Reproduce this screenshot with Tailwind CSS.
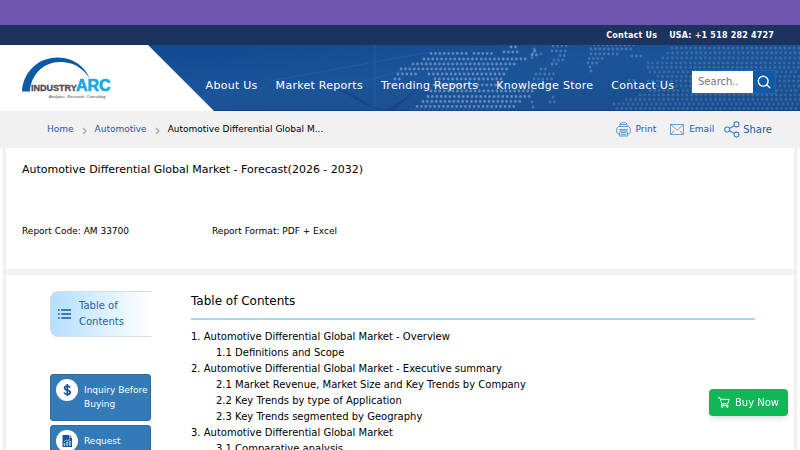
<!DOCTYPE html>
<html lang="en">
<head>
  <meta charset="UTF-8">
  <meta name="viewport" content="width=device-width, initial-scale=1">
  <title>Automotive Differential Global Market - Forecast(2026 - 2032)</title>
  <script src="https://cdn.jsdelivr.net/npm/@tailwindcss/browser@4"></script>
</head>
<body class="bg-white text-black font-['DejaVu_Sans',sans-serif]">
  <div class="h-[25px] bg-[#6f55ae]"></div>

  <!-- Top bar -->
  <div class="h-5 bg-[#1b335e] text-white text-[8px] font-bold tracking-wide flex items-center justify-end gap-3 pt-px pr-[26px]">
    <a href="#">Contact Us</a>
    <a href="tel:+15182824727">USA: +1 518 282 4727</a>
  </div>

  <!-- Header -->
  <header class="relative h-[66px] bg-[#19509a] overflow-hidden flex items-center">
    <svg class="absolute inset-0 w-full h-full" viewBox="0 0 800 66" preserveAspectRatio="xMaxYMid slice" aria-hidden="true">
      <defs>
        <linearGradient id="sky" x1="0" y1="0" x2="1" y2="1">
          <stop offset="0" stop-color="#0e4791"/>
          <stop offset=".5" stop-color="#1c5499"/>
          <stop offset="1" stop-color="#184d8b"/>
        </linearGradient>
      </defs>
      <rect width="800" height="66" fill="url(#sky)"/>
      <path d="M270 36L430 7M375 0v66M330 46l70-20" stroke="#3b74b3" stroke-width="1" opacity=".3"/>
      <path d="M312 36q24 6 43 18l20 10h8l-10-2q-20-14-35-18zM382 65q18-4 40-28q-18 22-28 28z" fill="#123f7c" opacity=".6"/>
      <!-- Dotted world map, one dashed line per row of dots -->
      <g fill="none" stroke="#a9c6e6" stroke-width="2.800" stroke-linecap="round" stroke-dasharray="0 4.400">
        <path opacity=".5" d="M431 8.500h36M474 8.500h20M424 14h104M413 19h104M401 24h106M398 29h20M429 29h76M395 34h8M435 34h68M434 40h68M431 46h105M428 51.500h104M423 56.500h99M417 61.500h99M411 66h90M511 2h6M504 7h14M535 6h1M532 10h5"/>
        <path opacity=".3" d="M553 1h15M552 6h15M560 10.500h5M554 15h10M552 19h6M534 4h1M533 8h1M532 13h1M541 9h1M594 0h40M591 4h40M591 9h28M589 13.500h16M588 18h12M590 22h1M591 26h1M632 11h12M541 24h6M536 29h18M534 34h18M539 39h10M553 52h4M550 57h6M532 57h4M533 62h1"/>
      </g>
      <g fill="none" stroke="#8db4da" stroke-width="2.800" stroke-linecap="round" stroke-dasharray="0 4.700">
        <path opacity=".26" d="M672 3h128M668 8h132M663 13h137M648 18h152M648 22.500h152M650 27h150M658 31.500h142M629 35.500h5M648 36h152M653 41h147M650 45.500h150M640 50h160M626 54.500h174M614 59h186M617 63.500h183"/>
      </g>
      <path d="M0 65.500h800" stroke="#0d4288"/>
    </svg>

    <!-- Logo on its slanted white panel -->
    <a href="#" class="relative z-10 shrink-0 w-[214px] h-full bg-white [clip-path:polygon(0_0,148px_0,100%_100%,0_100%)]" aria-label="IndustryARC">
      <svg class="block w-[114px] h-[66px]" viewBox="0 0 114 66">
        <path d="M22 46.500C23 29 36 12.500 58 12.500C74 12.500 85 22 90 34C82 21.500 72 17 60 17C44 17 31 29 30 46.500z" fill="#0c5aa6"/>
        <text x="31" y="46" font-family="Liberation Sans, sans-serif" font-weight="700" font-size="9" fill="#4a4a4c" stroke="#4a4a4c" stroke-width=".3">INDUSTRY</text>
        <text x="76" y="46" font-family="Liberation Sans, sans-serif" font-weight="700" font-size="16" fill="#1ba7e0" stroke="#1ba7e0" stroke-width=".6">ARC</text>
        <text x="49" y="53" font-family="Liberation Sans, sans-serif" font-style="italic" font-size="4" fill="#444">Analytics. Research. Consulting</text>
      </svg>
    </a>

    <nav class="relative -ml-[60px] mt-4 flex gap-[18px] text-[11px] leading-4 tracking-wide text-white whitespace-nowrap">
      <a href="#">Home</a>
      <a href="#">About Us</a>
      <a href="#">Market Reports</a>
      <a href="#">Trending Reports</a>
      <a href="#">Knowledge Store</a>
      <a href="#">Contact Us</a>
    </nav>

    <form class="relative ml-auto mr-6 mt-[7px] flex h-6 border border-[#1f66b0]">
      <input type="text" aria-label="Search" placeholder="Search.." class="w-[61px] bg-white px-[6px] text-[10px] text-black placeholder:text-[#757575] outline-none">
      <button type="submit" aria-label="Search" class="w-[22px] bg-[#0f5aa5] flex items-center justify-center">
        <svg class="size-[14px]" viewBox="0 0 14 14" fill="none" stroke="#fff" stroke-width="1.400" stroke-linecap="round"><circle cx="6.200" cy="6.200" r="4.900"/><path d="M9.800 9.800l3 3"/></svg>
      </button>
    </form>
  </header>

  <!-- Breadcrumb and page actions -->
  <div class="h-[37px] bg-[#f1f1f1] pl-[47px] pr-7 flex items-center justify-between text-[9px] text-[#2459a3]">
    <ol class="flex items-center gap-2">
      <li><a href="#">Home</a></li>
      <li><svg class="w-[5px] h-2 mt-[2px]" viewBox="0 0 5 8" fill="none" stroke="#aaa" stroke-width="1.400"><path d="M1 1l3 3-3 3"/></svg></li>
      <li><a href="#">Automotive</a></li>
      <li><svg class="w-[5px] h-2 mt-[2px]" viewBox="0 0 5 8" fill="none" stroke="#aaa" stroke-width="1.400"><path d="M1 1l3 3-3 3"/></svg></li>
      <li class="text-black">Automotive Differential Global M...</li>
    </ol>
    <div class="flex items-center">
      <button type="button" class="flex items-center gap-1 mr-[14px]">
        <svg class="size-[15px]" viewBox="0 0 15 15" fill="none" stroke="#4f8fc9" stroke-width=".9">
          <path d="M4 4.500V2l1.500-1.300h4L11 2v2.500M4.500 2.500h6M2.500 4.500h10l1.800 2v4l-1.500 1.300h-1.500M3.700 11.800H2.200L.7 10.500v-4l1.800-2M3 7.500h9M4 9l-.8 5h8.600L11 9zM5 10.500h5M4.700 12.300h5.600"/>
        </svg>
        Print
      </button>
      <button type="button" class="flex items-center gap-[5px] mr-[10px]">
        <svg class="w-[14px] h-[11px]" viewBox="0 0 14 11" fill="none" stroke="#4f8fc9" stroke-width=".8"><rect x=".5" y=".5" width="13" height="10"/><path d="M1 .8l6 5.400L13 .8M1 10.200l3-3.400M13 10.200l-3-3.400"/></svg>
        Email
      </button>
      <button type="button" class="flex items-center gap-[3px] text-[10px]">
        <svg class="w-4 h-[17px]" viewBox="0 0 16 17" fill="none" stroke="#3f84c4" stroke-width="1.100"><circle cx="3.200" cy="8.500" r="2.500"/><circle cx="12.500" cy="3.400" r="2.500"/><circle cx="12.500" cy="13.600" r="2.500"/><path d="M5.500 7.300l4.700-2.600M5.500 9.700l4.700 2.600"/></svg>
        Share
      </button>
    </div>
  </div>

  <main class="mx-[3px] px-[3px] bg-[#f1f1f1] flex flex-col gap-[6px]">
    <section class="bg-white h-[121px] px-4 pt-3">
      <h1 class="text-[11px] leading-5">Automotive Differential Global Market - Forecast(2026 - 2032)</h1>
      <div class="mt-[43px] flex text-[9px] leading-4">
        <p class="w-[190px]">Report Code: AM 33700</p>
        <p>Report Format: PDF + Excel</p>
      </div>
    </section>

    <section class="bg-white flex gap-10 pl-11 pr-[39px] py-4">
      <aside class="w-[101px] shrink-0">
        <a href="#toc" class="h-[46px] flex items-center gap-2 pl-[7px] border border-r-0 border-[#d5dde4] rounded-l-lg bg-linear-to-r from-[#b3dfff] to-white text-[10px] leading-4 text-[#2360a5]">
          <svg class="w-[13px] h-[10px] shrink-0" viewBox="0 0 13 10" fill="none" stroke="#14559f" stroke-width="1.300"><path d="M0 1h1.600M0 5h1.600M0 9h1.600M3.300 1H13M3.300 5H13M3.300 9H13"/></svg>
          <span>Table of<br>Contents</span>
        </a>
        <div class="mt-[37px] flex flex-col gap-1 text-[9px] leading-[14px] text-white">
          <a href="#" class="h-[47px] rounded-[3px] bg-[#337ab7] border border-[#2e6da4] flex items-start gap-[6px] pl-[5px] pt-1">
            <svg class="size-[22px] shrink-0" viewBox="0 0 22 22"><circle cx="11" cy="11" r="11" fill="#fff"/><path d="M14.200 8.400Q13.300 7.100 11.400 7.100Q8.600 7.100 8.600 9Q8.600 10.500 11.200 11.100Q14.200 11.700 14.200 13.400Q14.200 15.200 11.400 15.200Q9 15.200 8 13.600M11.300 5v12" fill="none" stroke="#14559f" stroke-width="1.700"/></svg>
            <span class="pt-1">Inquiry Before Buying</span>
          </a>
          <a href="#" class="h-[47px] rounded-[3px] bg-[#337ab7] border border-[#2e6da4] flex items-start gap-[6px] pl-[5px] pt-1">
            <svg class="size-[22px] shrink-0" viewBox="0 0 22 22"><circle cx="11" cy="11" r="11" fill="#fff"/><path d="M6.500 5h7L16 7.500V17H6.500z" fill="#14559f"/><path d="M13.500 5v2.500H16M8 15.500v-2h1v2zM10.700 15.500V12h1v3.500zM13.400 15.500V11h1v4.500zM8 11.500l2.700-1.500 1 .8 2.300-2" fill="none" stroke="#cfe2f3" stroke-width=".7"/></svg>
            <span class="pt-1">Request</span>
          </a>
        </div>
      </aside>

      <article id="toc" class="flex-1">
        <h2 class="h-[29px] border-b-2 border-[#a5d9f0] text-[12px] leading-5">Table of Contents</h2>
        <ol class="mt-[9px] text-[10px] leading-4">
          <li>1. Automotive Differential Global Market - Overview</li>
          <li class="pl-[25px]">1.1 Definitions and Scope</li>
          <li>2. Automotive Differential Global Market - Executive summary</li>
          <li class="pl-[25px]">2.1 Market Revenue, Market Size and Key Trends by Company</li>
          <li class="pl-[25px]">2.2 Key Trends by type of Application</li>
          <li class="pl-[25px]">2.3 Key Trends segmented by Geography</li>
          <li>3. Automotive Differential Global Market</li>
          <li class="pl-[25px]">3.1 Comparative analysis</li>
        </ol>
      </article>
    </section>
  </main>

  <button type="button" class="fixed right-3 bottom-[34px] h-[27px] w-[79px] rounded bg-[#10b757] text-white text-[10px] flex items-center justify-center gap-[5px] shadow-md">
    <svg class="w-3 h-[11px]" viewBox="0 0 12 11" fill="none" stroke="#fff" stroke-width="1"><path d="M0 .8h2l1.800 6h6L11.300 2.300H2.500M3.800 6.800L3.300 8.300h7"/><circle cx="4.300" cy="9.700" r=".8"/><circle cx="9.300" cy="9.700" r=".8"/></svg>
    Buy Now
  </button>
</body>
</html>
